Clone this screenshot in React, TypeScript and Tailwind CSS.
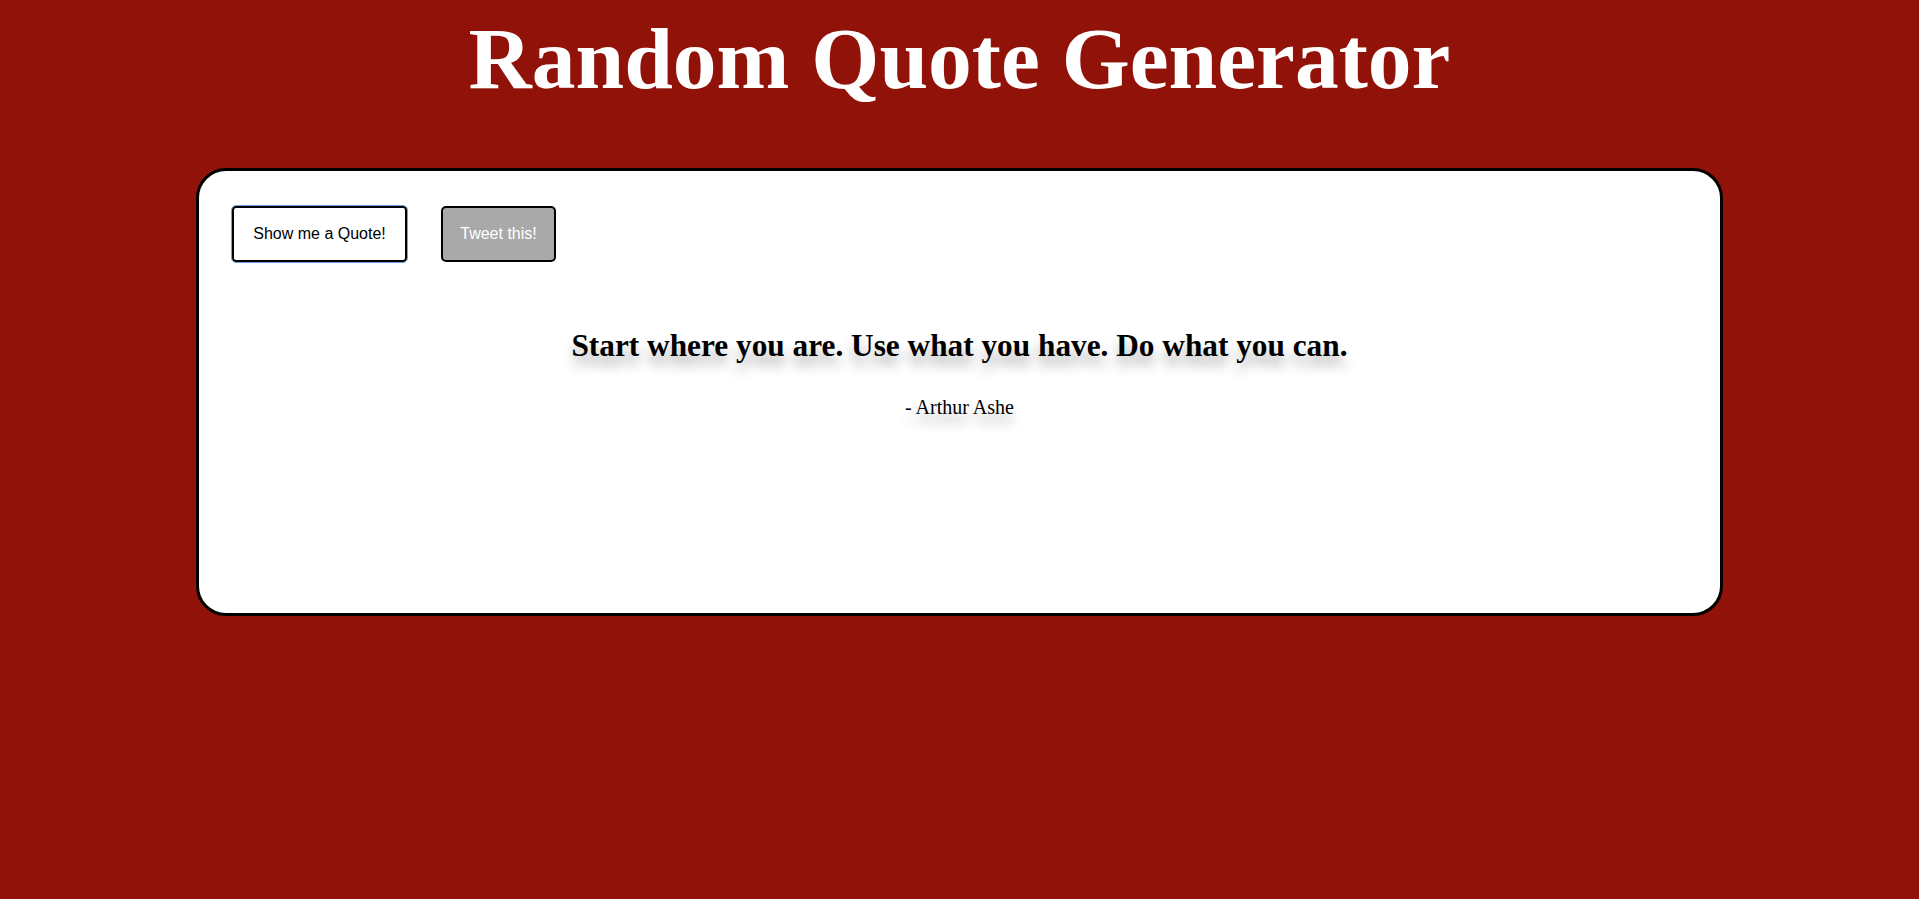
import React from "react";

export default function App() {
  return (
    <div className="min-h-[899px] w-full bg-[#911208] pt-[10px]">
      <h1 className="text-center text-white font-bold text-[87.5px] leading-[98px] font-['Liberation_Serif','Times_New_Roman',serif] m-0">
        Random Quote Generator
      </h1>
      <div className="mx-auto mt-[60px] w-[1527px] h-[448px] bg-white border-[3px] border-black rounded-[30px] pt-[35px] pl-[33px]">
        <div className="flex items-start gap-[34px]">
          <button className="w-[175px] h-[56px] bg-white border-2 border-black rounded-[4px] outline outline-1 outline-[#6f9fe0] text-black text-[16px] font-['Liberation_Sans',Arial,sans-serif] flex items-center justify-center">
            Show me a Quote!
          </button>
          <button className="w-[115px] h-[56px] bg-[#a9a9a9] border-2 border-black rounded-[5px] text-white text-[16px] font-['Liberation_Sans',Arial,sans-serif] flex items-center justify-center">
            Tweet this!
          </button>
        </div>
        <div className="pr-[33px] font-['Liberation_Serif','Times_New_Roman',serif] text-black">
          <h2 className="mt-[66px] text-center font-bold text-[31.3px] leading-[36px] [text-shadow:0_10px_12px_rgba(0,0,0,0.3)]">
            Start where you are. Use what you have. Do what you can.
          </h2>
          <p className="mt-[32px] text-center text-[20px] leading-[22px] [text-shadow:0_10px_12px_rgba(0,0,0,0.3)]">
            - Arthur Ashe
          </p>
        </div>
      </div>
    </div>
  );
}
